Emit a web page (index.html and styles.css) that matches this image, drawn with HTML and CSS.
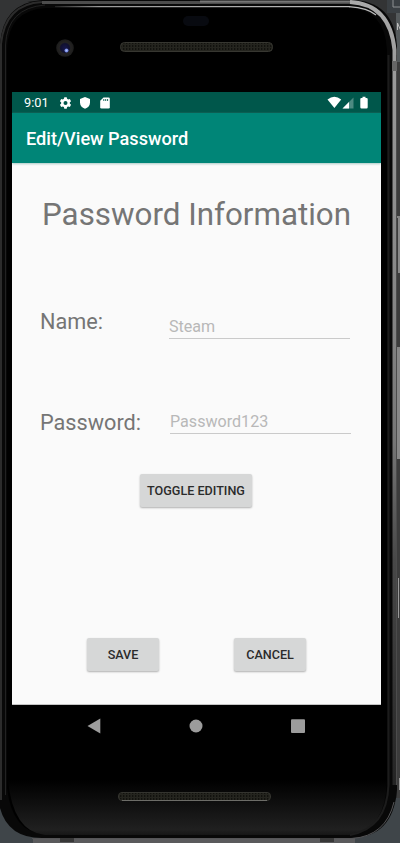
FILE: index.html
```html
<!DOCTYPE html>
<html lang="en">
<head>
<meta charset="utf-8">
<title>Edit/View Password</title>
<link rel="stylesheet" href="styles.css">
</head>
<body>
<div class="device">
  <svg class="shell" viewBox="0 0 400 843" aria-hidden="true">
    <defs>
      <linearGradient id="right" gradientUnits="userSpaceOnUse" x1="0" y1="0" x2="0" y2="800">
        <stop offset="0" stop-color="#aaa"/><stop offset=".1" stop-color="#999"/><stop offset=".38" stop-color="#858585"/><stop offset=".55" stop-color="#777"/><stop offset=".7" stop-color="#484848"/><stop offset="1" stop-color="#222"/>
      </linearGradient>
      <linearGradient id="top" x1="0" y1="0" x2="1" y2="0">
        <stop offset="0" stop-color="#333"/><stop offset=".6" stop-color="#555"/><stop offset="1" stop-color="#999"/>
      </linearGradient>
      <linearGradient id="chin" x1="0" y1="0" x2="0" y2="1">
        <stop offset="0" stop-color="#000"/><stop offset=".9" stop-color="#202020"/><stop offset="1" stop-color="#161616"/>
      </linearGradient>
      <linearGradient id="gleam" x1="0" y1="0" x2="1" y2="0">
        <stop offset="0" stop-color="#222"/><stop offset=".15" stop-color="#999"/><stop offset="1" stop-color="#bbb"/>
      </linearGradient>
      <radialGradient id="lens"><stop offset="0" stop-color="#16164a"/><stop offset=".5" stop-color="#111130"/><stop offset=".65" stop-color="#242322"/><stop offset="1" stop-color="#1c1c1c"/></radialGradient>
      <pattern id="mesh" width="3" height="3" patternUnits="userSpaceOnUse"><rect width="3" height="3" fill="#25251f"/><rect width="1.4" height="2" fill="#12120e"/></pattern>
    </defs>
    <rect width="400" height="843" fill="#333435"/>
    <path d="M387 0h13v13h-13z" fill="#3a3f43"/><path d="M393 -1v8h8" fill="none" stroke="#8d9193"/>
    <path d="M396 13h4v49h-4z" fill="#555a5c"/><path d="M397.500 30v-7l3 7v-7" fill="none" stroke="#bbb"/>
    <path d="M397 62h3v736h-3z" fill="#3c3c3c"/>
    <path d="M398 218h2v55h-2zM397 349h3v110h-3z" fill="#888"/><path d="M397 217h3M397 348h3" stroke="#ccc"/><path d="M398.500 578v40M399.500 778v12" stroke="#999"/>
    <path d="M0 798v45h400v-45z" fill="#3f4549"/>
    <path d="M33 840.500H355" stroke="#5a5a5c" stroke-width="5"/>
    <path d="M0 0V30Q7 4 36 0z" fill="#333435"/>
    <path d="M0 44Q3 3 42 0H350Q394 0 397 46V790Q393 838 350 838H42Q8 838 0 808Z" fill="#080808"/>
    <path d="M1 800V44Q5 4 42 2" fill="none" stroke="#2c2c2c" stroke-width="2"/>
    <path d="M5.500 795V45Q7 8 45 5" fill="none" stroke="#222"/>
    <path d="M42 2.500H350" fill="none" stroke="#4c4c4c" stroke-width="3"/>
    <path d="M200 1.500H352" fill="none" stroke="#777" stroke-width="2"/>
    <path d="M350 2Q390 4 394.500 50V785" fill="none" stroke="url(#right)" stroke-width="4"/>
    <path d="M396.500 55V785" fill="none" stroke="#4c4c4c"/>
    <path d="M7 50Q8 10 46 8H348Q385 9 387 50V788Q382 830 350 834H44Q12 832 7 788Z" fill="#000"/>
    <rect x="55" y="6" width="295" height="1.200" fill="url(#gleam)"/>
    <path d="M349 6.600Q368 8 376 15" fill="none" stroke="#bbb" stroke-width="1.200"/>
    <path d="M8 780H387Q386 830 350 835H45Q13 832 8 780Z" fill="url(#chin)"/>
    <path d="M388.500 55V785Q387 828 350 835" fill="none" stroke="#1c1c1c" stroke-width="2"/>
    <path d="M32 838.500H352Q386 836 394 802" fill="none" stroke="#555557"/>
    <path d="M392 61h5v10h-5z" fill="#666"/><path d="M60 838h14v4H60zM320 838h14v4h-14z" fill="#373737"/>
    <rect x="183" y="16" width="26" height="10" rx="5" fill="#080a10"/>
    <circle cx="65" cy="48" r="8.800" fill="url(#lens)"/><circle cx="66.500" cy="50.500" r="2" fill="#7186df"/><circle cx="66.500" cy="50.500" r="1" fill="#b2c1ff"/>
    <rect x="120.500" y="42.500" width="152" height="9" rx="4" fill="url(#mesh)" stroke="#373731"/>
    <rect x="118.500" y="792.500" width="152" height="8" rx="3.500" fill="url(#mesh)" stroke="#34342f"/>
    <path d="M122 800.500H267" stroke="#6c6c67"/>
  </svg>

  <main class="screen">
    <header class="status">
      <span class="clock">9:01</span>
      <svg class="left-icons" viewBox="0 0 54 14" aria-hidden="true">
        <g fill="#fff">
          <circle cx="6.500" cy="7" r="3.200" fill="none" stroke="#fff" stroke-width="2.400"/>
          <path id="tooth" d="M5.300 1.300h2.400l.5 2.200H4.800zM5.300 12.700h2.400l.5-2.200H4.800z"/>
          <use href="#tooth" transform="rotate(60 6.500 7)"/>
          <use href="#tooth" transform="rotate(120 6.500 7)"/>
          <path d="M26 1l5 2v3.700c0 2.800-2 5.100-5 6-3-.9-5-3.200-5-6V3z"/>
          <path d="M44.500 1.500h5q1.300 0 1.300 1.300v8.500q0 1.200-1.300 1.200h-7q-1.300 0-1.300-1.200V4.800z"/>
          <path d="M44.800 3v2M46.700 3v2M48.600 3v2" stroke="#00574b" stroke-width=".9"/>
        </g>
      </svg>
      <svg class="right-icons" viewBox="0 0 42 14" aria-hidden="true">
        <path d="M.5 3.500Q7.300-2 14.200 3.500L7.400 12z" fill="#fff"/>
        <path d="M26.500 1.500v11h-11z" fill="#4d8a82"/><path d="M22 6V12.500h-6.500z" fill="#fff"/>
        <path d="M35.500.7h3v1.200h1q1.200 0 1.200 1.200v8.200q0 1.200-1.200 1.200h-5q-1.200 0-1.200-1.200V3.100q0-1.200 1.200-1.200h1z" fill="#fff"/>
      </svg>
    </header>
    <div class="appbar">Edit/View Password</div>
    <div class="content">
      <h1 class="heading">Password Information</h1>
      <div class="field name-field"><span class="label">Name:</span><span class="entry">Steam</span></div>
      <div class="field pass-field"><span class="label">Password:</span><span class="entry">Password123</span></div>
      <button class="btn toggle">TOGGLE EDITING</button>
      <div class="actions"><button class="btn">SAVE</button><button class="btn">CANCEL</button></div>
    </div>
  </main>
  <nav class="nav">
    <svg viewBox="0 0 14 16"><path d="M.5 8L13.300.5v15z"/></svg>
    <svg viewBox="0 0 14 16"><circle cx="7" cy="8" r="6.500"/></svg>
    <svg viewBox="0 0 14 16"><rect y="1.200" width="14" height="13.800" rx="1"/></svg>
  </nav>
</div>
</body>
</html>
```
FILE: styles.css
```css
* { box-sizing: border-box; }
body { margin: 0; font-family: Roboto, sans-serif; background: #333435; }
.device { position: relative; width: 400px; height: 843px; overflow: hidden; padding: 92px 19px 0 12px; }
.shell { position: absolute; inset: 0; width: 400px; height: 843px; }
.screen { position: relative; display: flex; flex-direction: column; height: 613px; overflow: hidden; background: #fafafa; border-bottom: 1px solid #c4c4c4; }
.status { display: flex; align-items: center; height: 21px; background: #00574b; padding: 0 12px; }
.clock { width: 34px; color: #fff; font-size: 12.800px; font-weight: 400; line-height: 21px; }
.left-icons { width: 54px; height: 14px; margin-left: 1px; }
.right-icons { width: 42px; height: 14px; margin-left: auto; }
.appbar { height: 50px; padding-left: 14px; background: #008577; color: #fff; font-size: 18.150px; font-weight: 500; line-height: 52px; box-shadow: 0 1px 2px #a9c9c5; }
.content { display: flex; flex-direction: column; padding: 31px 30px 0 28px; }
.heading { margin: 0 0 0 2px; height: 42px; line-height: 42px; font-size: 31.350px; font-weight: 400; color: #757575; white-space: nowrap; }
.field { display: flex; }
.label { flex: none; width: 129px; font-size: 21.700px; line-height: 30px; color: #757575; }
.entry { flex: none; width: 181px; height: 25px; line-height: 26px; font-size: 16.100px; color: #b8b8b8; border-bottom: 1px solid #cacaca; }
.name-field { height: 95px; margin-top: 71px; }
.name-field .entry { margin-top: 7px; }
.pass-field { height: 72px; padding-top: 6px; }
.pass-field .entry { margin: 1px 0 0 1px; }
.btn { width: 72px; height: 33px; padding: 0; border: 0; border-radius: 2px; background: #d6d7d7; box-shadow: 0 1px 2px #0000004d; font: 500 12.600px/33px Roboto, sans-serif; color: #2b2b2b; white-space: nowrap; }
.toggle { width: 112px; margin-left: 100px; }
.actions { display: flex; gap: 75px; margin: 131px 0 0 47px; }
.nav { position: relative; display: flex; gap: 88px; padding: 13px 0 0 75px; }
.nav svg { width: 14px; height: 16px; fill: #9c9c9c; }
```
